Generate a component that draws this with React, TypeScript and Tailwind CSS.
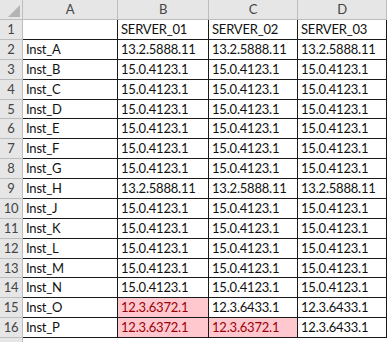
import React from "react";

const rows: { n: number; a: string; b: string; c: string; d: string; h: string }[] = [
  { n: 1, a: "", b: "SERVER_01", c: "SERVER_02", d: "SERVER_03", h: "h-[20px]" },
  { n: 2, a: "Inst_A", b: "13.2.5888.11", c: "13.2.5888.11", d: "13.2.5888.11", h: "h-[20px]" },
  { n: 3, a: "Inst_B", b: "15.0.4123.1", c: "15.0.4123.1", d: "15.0.4123.1", h: "h-[20px]" },
  { n: 4, a: "Inst_C", b: "15.0.4123.1", c: "15.0.4123.1", d: "15.0.4123.1", h: "h-[20px]" },
  { n: 5, a: "Inst_D", b: "15.0.4123.1", c: "15.0.4123.1", d: "15.0.4123.1", h: "h-[19px]" },
  { n: 6, a: "Inst_E", b: "15.0.4123.1", c: "15.0.4123.1", d: "15.0.4123.1", h: "h-[20px]" },
  { n: 7, a: "Inst_F", b: "15.0.4123.1", c: "15.0.4123.1", d: "15.0.4123.1", h: "h-[20px]" },
  { n: 8, a: "Inst_G", b: "15.0.4123.1", c: "15.0.4123.1", d: "15.0.4123.1", h: "h-[20px]" },
  { n: 9, a: "Inst_H", b: "13.2.5888.11", c: "13.2.5888.11", d: "13.2.5888.11", h: "h-[20px]" },
  { n: 10, a: "Inst_J", b: "15.0.4123.1", c: "15.0.4123.1", d: "15.0.4123.1", h: "h-[20px]" },
  { n: 11, a: "Inst_K", b: "15.0.4123.1", c: "15.0.4123.1", d: "15.0.4123.1", h: "h-[20px]" },
  { n: 12, a: "Inst_L", b: "15.0.4123.1", c: "15.0.4123.1", d: "15.0.4123.1", h: "h-[20px]" },
  { n: 13, a: "Inst_M", b: "15.0.4123.1", c: "15.0.4123.1", d: "15.0.4123.1", h: "h-[19px]" },
  { n: 14, a: "Inst_N", b: "15.0.4123.1", c: "15.0.4123.1", d: "15.0.4123.1", h: "h-[20px]" },
  { n: 15, a: "Inst_O", b: "12.3.6372.1", c: "12.3.6433.1", d: "12.3.6433.1", h: "h-[20px]" },
  { n: 16, a: "Inst_P", b: "12.3.6372.1", c: "12.3.6372.1", d: "12.3.6433.1", h: "h-[20px]" },
];

const bad = new Set(["15-b", "16-b", "16-c"]);

function Cell({ text, w, red }: { text: string; w: string; red?: boolean }) {
  return (
    <div
      className={`${w} shrink-0 h-full border-r border-b border-[#1a1a1a] flex items-center pl-[3px] overflow-hidden whitespace-nowrap ${
        red ? "bg-[#ffc7ce] text-[#9c0006]" : "bg-white text-[#111]"
      }`}
    >
      {text}
    </div>
  );
}

export default function App() {
  return (
    <div
      className="w-[387px] h-[342px] bg-white overflow-hidden text-[13px] tracking-[-0.2px] leading-none"
      style={{ fontFamily: 'Lato, "Liberation Sans", sans-serif' }}
    >
      <div className="flex h-[20px] bg-[#e6e6e6] text-[#444]">
        <div className="w-[23px] shrink-0 h-full border-r border-b border-[#bdbdbd] relative">
          <svg className="absolute right-[2px] bottom-[2px]" width="12" height="12" viewBox="0 0 12 12">
            <polygon points="12,0 12,12 0,12" fill="#b4b4b4" />
          </svg>
        </div>
        {[
          ["A", "w-[95px]"],
          ["B", "w-[91px]"],
          ["C", "w-[89px]"],
          ["D", "w-[89px]"],
        ].map(([l, w]) => (
          <div
            key={l}
            className={`${w} shrink-0 h-full border-r border-b border-[#bdbdbd] flex items-center justify-center`}
          >
            {l}
          </div>
        ))}
      </div>
      {rows.map((r) => (
        <div key={r.n} className={`flex ${r.h}`}>
          <div className="w-[23px] shrink-0 h-full bg-[#e6e6e6] text-[#444] border-r border-b border-[#bdbdbd] flex items-center justify-center">
            {r.n}
          </div>
          <Cell text={r.a} w="w-[95px]" />
          <Cell text={r.b} w="w-[91px]" red={bad.has(`${r.n}-b`)} />
          <Cell text={r.c} w="w-[89px]" red={bad.has(`${r.n}-c`)} />
          <Cell text={r.d} w="w-[89px]" />
        </div>
      ))}
      <div className="flex h-[10px]">
        <div className="w-[23px] shrink-0 h-full bg-[#e6e6e6] border-r border-[#bdbdbd]" />
      </div>
    </div>
  );
}
